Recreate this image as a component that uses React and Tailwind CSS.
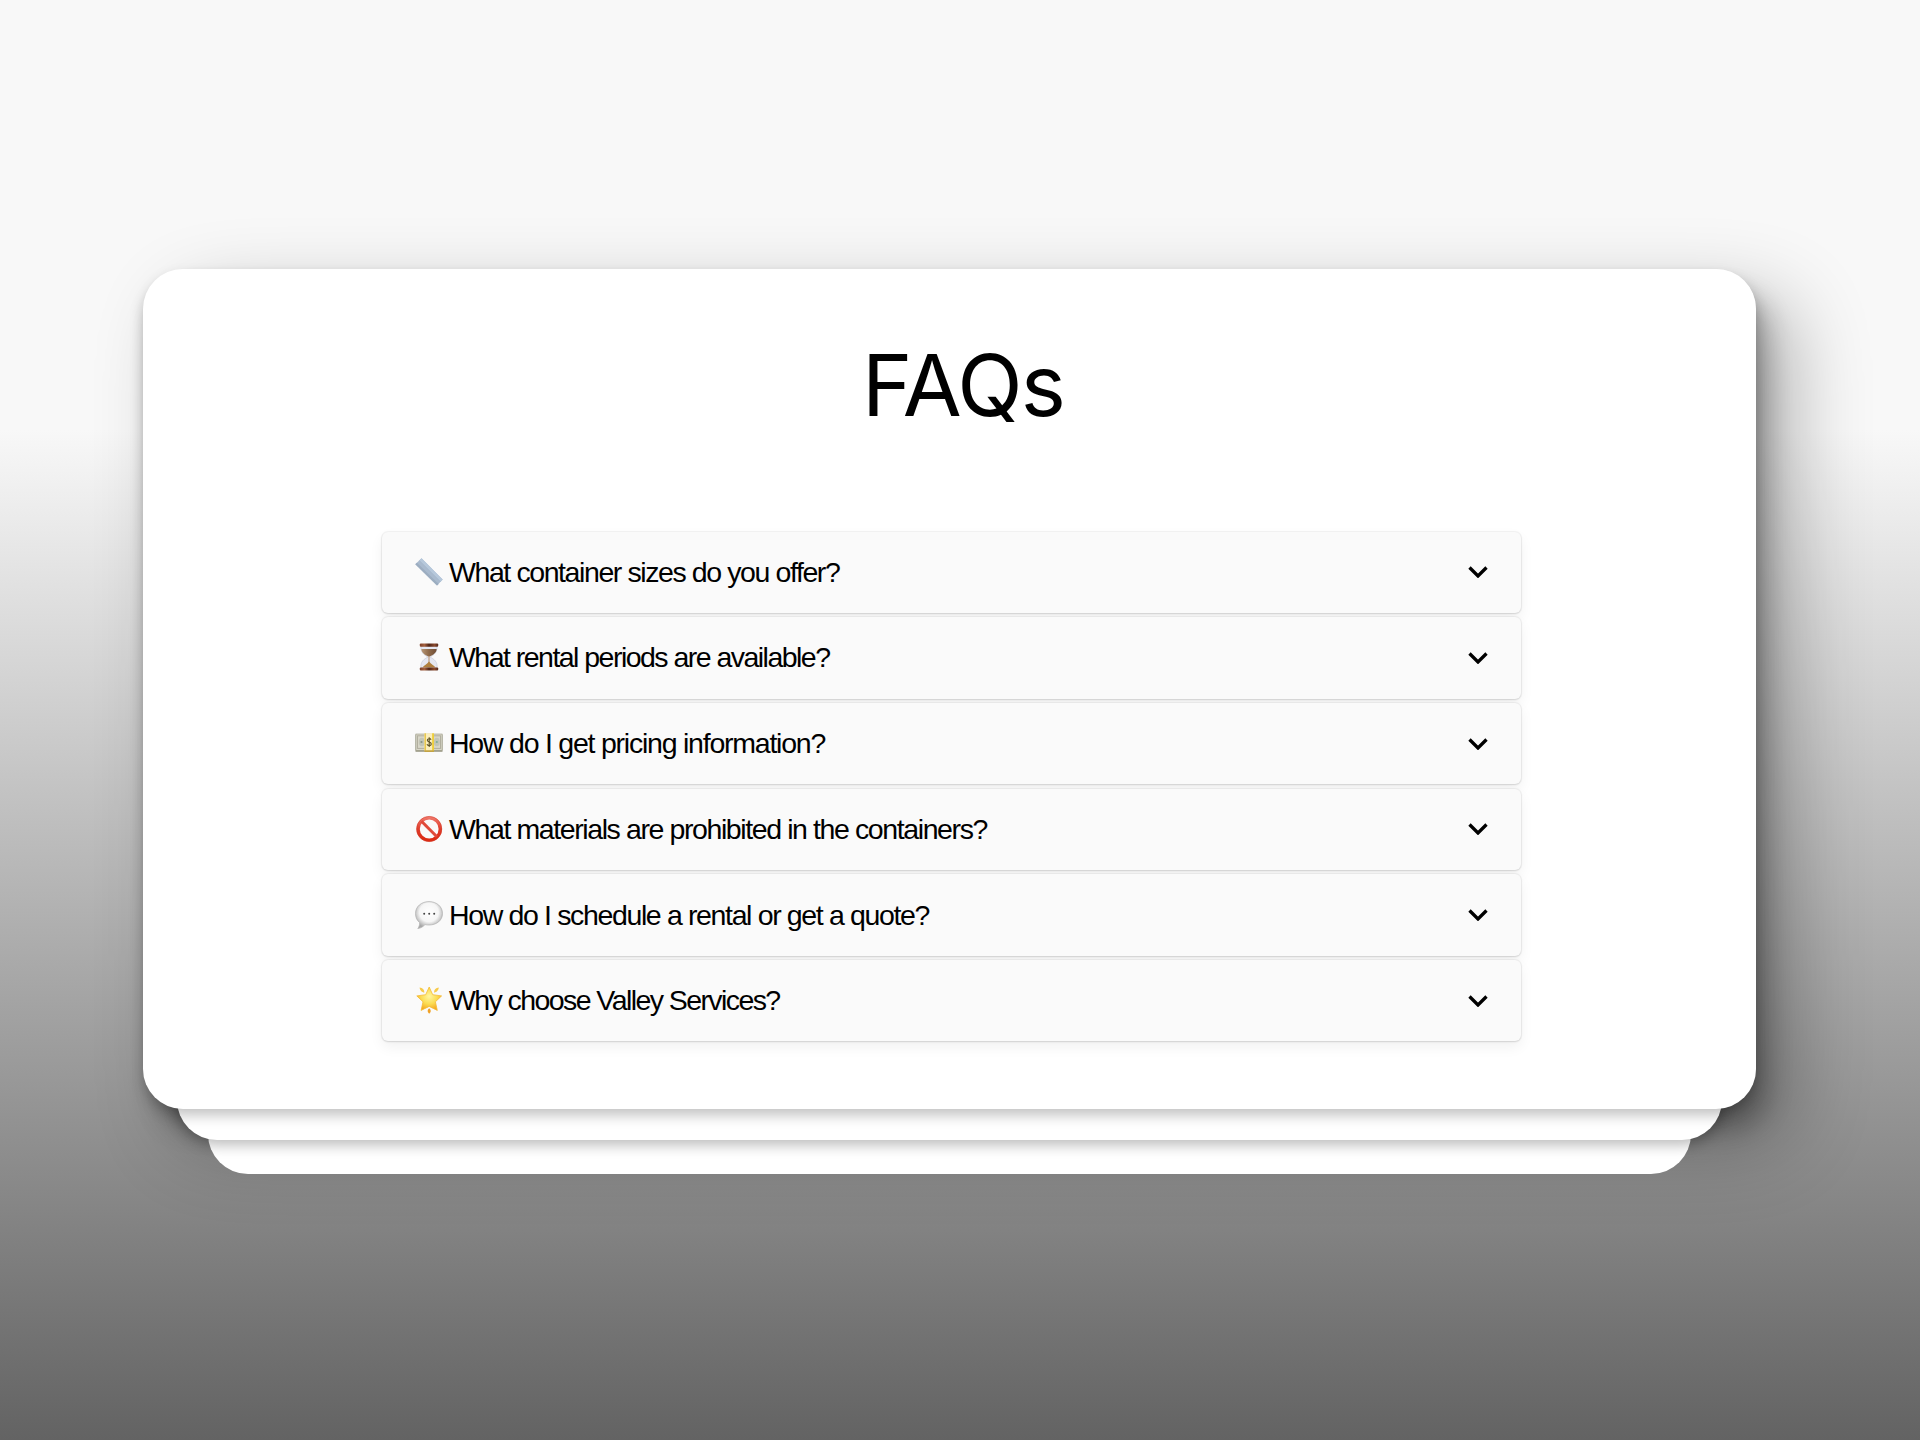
import React from 'react';

const RulerIcon = () => (
  <svg viewBox="0 0 28 28" className="w-7 h-7">
    <path d="M6.5 0.3 L27.7 21.5 L22 27.6 L0.3 6.3 Z" fill="#a9bace" />
    <path d="M6.5 0.3 L27.7 21.5 L25.6 23.8 L4.3 2.5 Z" fill="#b6c8db" />
    <path d="M2 4.7 L23.7 26 L22 27.6 L0.3 6.3 Z" fill="#9cadc0" />
    <path d="M4.3 2.5 L25.6 23.8" stroke="#9fb2c7" strokeWidth="0.5" />
  </svg>
);

const HourglassIcon = () => (
  <svg viewBox="0 0 28 28" className="w-7 h-7">
    <defs>
      <linearGradient id="wood" x1="0" x2="1">
        <stop offset="0" stopColor="#7d3f26" />
        <stop offset="0.25" stopColor="#a5613f" />
        <stop offset="0.5" stopColor="#4f2415" />
        <stop offset="0.8" stopColor="#8a4a2e" />
        <stop offset="1" stopColor="#55281a" />
      </linearGradient>
      <linearGradient id="sand" x1="0" x2="1">
        <stop offset="0" stopColor="#b89878" />
        <stop offset="0.5" stopColor="#8e6a4a" />
        <stop offset="1" stopColor="#6f4d36" />
      </linearGradient>
    </defs>
    <path d="M6 3.5 H22 C22.5 9 19 12 15 14 C19 16 23 19 22 25 H6 C5 19 9 16 13 14 C9 12 5.5 9 6 3.5 Z" fill="#e6e8f2" stroke="#c3c7d6" strokeWidth="0.6" />
    <path d="M6.3 6 H21.7 C21.5 9.5 18.5 12 14 13.5 C9.5 12 6.5 9.5 6.3 6 Z" fill="url(#sand)" />
    <path d="M13.6 13 H14.4 V20 H13.6 Z" fill="#a87c50" />
    <path d="M14 18.5 C16 21 19 22.5 20.5 24.5 H7.5 C9 22.5 12 21 14 18.5 Z" fill="#b0803f" />
    <rect x="4.8" y="0.5" width="18.4" height="3.2" rx="1" fill="url(#wood)" />
    <rect x="4.8" y="24.4" width="18.4" height="3.2" rx="1" fill="url(#wood)" />
  </svg>
);

const MoneyIcon = () => (
  <svg viewBox="0 0 28 28" className="w-7 h-7">
    <rect x="0.5" y="5.5" width="27" height="17.3" fill="#9b9a86" />
    <rect x="0.9" y="5" width="26.2" height="16.3" fill="#d8d6c8" stroke="#9d9c88" strokeWidth="0.6" />
    <rect x="2.5" y="6.8" width="23" height="12.6" fill="none" stroke="#b1af9f" strokeWidth="1" />
    <ellipse cx="6.8" cy="13" rx="3" ry="4.3" fill="#c2c5b8" />
    <ellipse cx="21.8" cy="13" rx="3" ry="4.3" fill="#c2c5b8" />
    <circle cx="6.5" cy="13" r="1.1" fill="#889486" />
    <circle cx="21.8" cy="13" r="1.1" fill="#7fae95" />
    <rect x="9.5" y="4.3" width="9.4" height="17.4" fill="#fbeebb" />
    <rect x="9.5" y="4.3" width="1.5" height="17.4" fill="#e9c84e" />
    <rect x="17.2" y="4.3" width="1.7" height="17.4" fill="#eccb2f" />
    <rect x="9.5" y="21.4" width="9.4" height="1.4" fill="#c7a130" />
    <path d="M16.1 10.7 C15.3 9.2 12.2 9.3 12.3 11.3 C12.4 13.3 16.3 12.6 16.3 15 C16.3 17 13 17.2 11.9 15.3 M14.2 8.2 V18" fill="none" stroke="#5e5327" strokeWidth="1.1" />
  </svg>
);

const ProhibitedIcon = () => (
  <svg viewBox="0 0 28 28" className="w-7 h-7">
    <defs>
      <linearGradient id="ban" x1="0" y1="0" x2="0" y2="1">
        <stop offset="0" stopColor="#ef7568" />
        <stop offset="0.5" stopColor="#df3c2b" />
        <stop offset="1" stopColor="#dc2a12" />
      </linearGradient>
    </defs>
    <circle cx="14.2" cy="14" r="11.1" fill="none" stroke="url(#ban)" strokeWidth="3.4" />
    <path d="M6.5 6.2 L21.9 21.8" stroke="#e04a3a" strokeWidth="3" />
    <circle cx="14.2" cy="14" r="12.6" fill="none" stroke="#cf3a29" strokeWidth="0.5" />
  </svg>
);

const SpeechIcon = () => (
  <svg viewBox="0 0 28 28" className="w-7 h-7">
    <defs>
      <radialGradient id="bubble" cx="0.5" cy="0.4" r="0.58">
        <stop offset="0" stopColor="#ffffff" />
        <stop offset="0.6" stopColor="#f6f6f6" />
        <stop offset="1" stopColor="#a8a8a8" />
      </radialGradient>
    </defs>
    <path d="M14 0.6 C21.5 0.6 27.5 5.5 27.5 12.5 C27.5 19.5 21.5 24 14 24 C12.5 24 11.3 23.9 10 23.6 C8 25.8 5.6 27.3 2.8 27.5 C4 26 4.8 24 4.6 21.6 C2 19.5 0.5 16.5 0.5 12.5 C0.5 5.5 6.5 0.6 14 0.6 Z" fill="url(#bubble)" stroke="#b0b0b0" strokeWidth="0.7" />
    <circle cx="9.2" cy="12.7" r="1" fill="#444" />
    <circle cx="14.2" cy="12.7" r="1" fill="#444" />
    <circle cx="19.2" cy="12.7" r="1" fill="#444" />
  </svg>
);

const StarIcon = () => (
  <svg viewBox="0 0 28 28" className="w-7 h-7">
    <defs>
      <radialGradient id="star" cx="0.5" cy="0.4" r="0.6">
        <stop offset="0" stopColor="#fff6a0" />
        <stop offset="0.55" stopColor="#fbdc52" />
        <stop offset="1" stopColor="#f3a520" />
      </radialGradient>
    </defs>
    <path d="M14.2 1 L17.7 8.7 L26.6 9.9 L20.4 15.8 L22.3 24.4 L14.2 20.4 L6.1 24.4 L8 15.8 L1.8 9.9 L10.7 8.7 Z" fill="url(#star)" stroke="#f5bb35" strokeWidth="0.8" strokeLinejoin="round" />
    <path d="M4.6 1.6 C7.6 2 9.4 3.8 9.4 6.6 C7 6.6 4.8 4.4 4.6 1.6 Z M23.8 1.6 C20.8 2 19 3.8 19 6.6 C21.4 6.6 23.6 4.4 23.8 1.6 Z" fill="#f7cb4c" />
    <path d="M14.2 22.3 C16.2 24 16.4 26 14.2 27.7 C12 26 12.2 24 14.2 22.3 Z" fill="#f0a124" />
  </svg>
);

const faqs = [
  { icon: RulerIcon, question: 'What container sizes do you offer?', tracking: 'tracking-[-1.41px]' },
  { icon: HourglassIcon, question: 'What rental periods are available?', tracking: 'tracking-[-1.53px]' },
  { icon: MoneyIcon, question: 'How do I get pricing information?', tracking: 'tracking-[-1.23px]' },
  { icon: ProhibitedIcon, question: 'What materials are prohibited in the containers?', tracking: 'tracking-[-1.4px]' },
  { icon: SpeechIcon, question: 'How do I schedule a rental or get a quote?', tracking: 'tracking-[-1.36px]' },
  { icon: StarIcon, question: 'Why choose Valley Services?', tracking: 'tracking-[-1.58px]' },
];

const FaqItem = ({ icon: Icon, question, tracking }) => (
  <button className="flex items-center w-full h-[81.5px] px-[33px] bg-[#fafafa] rounded-md text-left shadow-[0_0_1px_1px_rgba(0,0,0,0.05),0_1px_2px_rgba(0,0,0,0.1),0_6px_14px_rgba(0,0,0,0.06)]">
    <span className="pb-px">
      <Icon />
    </span>
    <span className={`ml-[6px] pb-px text-[28.5px] leading-9 whitespace-nowrap text-black ${tracking}`}>{question}</span>
    <svg viewBox="0 0 20 12" className="ml-auto w-5 h-3">
      <path d="M1.5 1.5 L10 10 L18.5 1.5" fill="none" stroke="#000" strokeWidth="3.3" />
    </svg>
  </button>
);

const App = () => {
  return (
    <div
      className="relative w-[1920px] h-[1440px] pt-[269px] pl-[143px] overflow-hidden bg-[linear-gradient(180deg,#f8f8f8_0px,#f8f8f8_430px,#636363_1440px)] font-['Liberation_Sans',Arial,sans-serif]"
    >
      <div className="relative isolate w-[1612.5px] h-[840px]">
        {/* Ambient shadow, then the stacked sheets behind the card */}
        <div className="absolute -z-30 inset-0 rounded-[40px] shadow-[13px_22px_24px_rgba(0,0,0,0.22),34px_32px_80px_rgba(0,0,0,0.3)]" />
        <div className="absolute -z-20 left-[65px] right-[65px] top-[100px] bottom-[-65px] rounded-[40px] bg-white" />
        <div className="absolute -z-10 left-[34px] right-[34px] top-[60px] bottom-[-31px] rounded-[40px] bg-white shadow-[0_5px_14px_rgba(0,0,0,0.27)]" />

        <div className="h-full rounded-[40px] bg-white pt-[69px] pl-[239px] shadow-[0_7px_14px_-1px_rgba(0,0,0,0.25)]">
          <h1 className="w-[1162px] text-center font-['Inter',sans-serif] text-[85.5px] leading-[94px] tracking-[-1.8px] text-black">FAQs</h1>
          <div className="mt-[99.5px] w-[1139px] flex flex-col gap-[4.2px]">
            {faqs.map((faq) => (
              <FaqItem key={faq.question} icon={faq.icon} question={faq.question} tracking={faq.tracking} />
            ))}
          </div>
        </div>
      </div>
    </div>
  );
};

export default App;
